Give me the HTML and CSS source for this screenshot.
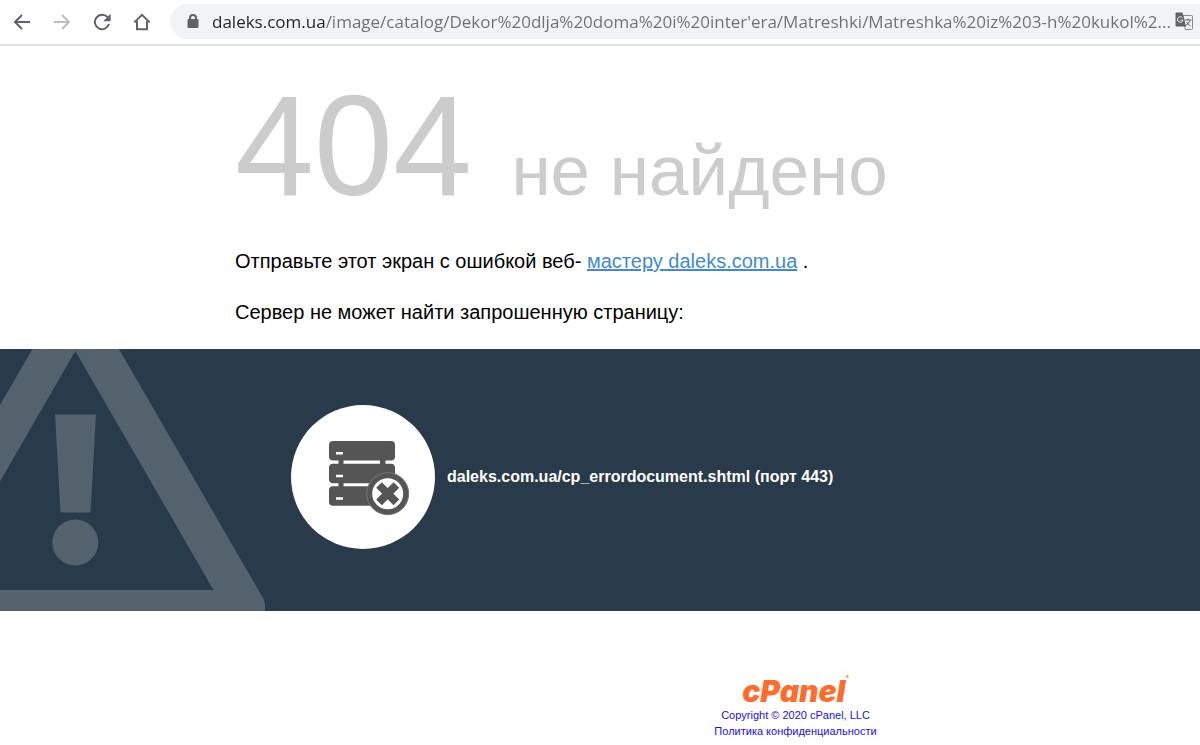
FILE: index.html
```
<!DOCTYPE html>
<html lang="ru">
  <head>
    <meta charset="utf-8">
    <title>404 не найдено</title>
    <link rel="stylesheet" href="styles.css">
  </head>
  <body>
    <div class="toolbar">
      <button class="nav-button" type="button" aria-label="Назад">
        <svg width="18" height="18" viewBox="0 0 18 18"><path d="M17 9H2M9 2L2 9l7 7"/></svg>
      </button>
      <button class="nav-button" type="button" aria-label="Вперёд" disabled>
        <svg width="18" height="18" viewBox="0 0 18 18"><path d="M1 9h15M9 2l7 7-7 7"/></svg>
      </button>
      <button class="nav-button" type="button" aria-label="Обновить">
        <svg width="18" height="18" viewBox="0 0 18 18"><path d="M14.5 4.2A7.2 7.2 0 1 0 16 11"/><path class="solid" d="M17.6 .8v7.4h-7.4z"/></svg>
      </button>
      <button class="nav-button" type="button" aria-label="Главная">
        <svg width="18" height="18" viewBox="0 0 18 18"><path d="M1.3 9.4L9 1.8l7.7 7.6M4 8v8.2h10V8"/></svg>
      </button>
      <div class="address">
        <svg class="lock" width="12" height="15" viewBox="0 0 12 15"><path class="solid" d="M1.5 5h9q1 0 1 1v7q0 1-1 1h-9q-1 0-1-1V6q0-1 1-1z"/><path d="M3 6V4a3 3 0 0 1 6 0v2"/></svg>
        <input class="url" type="text" aria-label="Адрес" value="daleks.com.ua/image/catalog/Dekor%20dlja%20doma%20i%20inter'era/Matreshki/Matreshka%20iz%203-h%20kukol%2...">
        <button class="translate" type="button" aria-label="Перевести">
          <svg width="19" height="19" viewBox="0 0 19 19">
            <path class="page" d="M8 3.5h8.5q1 0 1 1v12q0 1-1 1h-6.2z"/>
            <path class="strokes" d="M9.5 8h7M13 6.5V8M15 8q-1 4-5 6M11.5 10q1.5 3 4 4"/>
            <path class="solid" d="M1.5 .5h6L11 14.5H1.5q-1 0-1-1v-12q0-1 1-1z"/>
            <path class="mark" d="M7.5 5.8A2.8 2.8 0 1 0 8 8.2H5.3"/>
          </svg>
        </button>
      </div>
    </div>

    <div class="content">
      <h1>404 <span class="reason">не найдено</span></h1>
      <p>Отправьте этот экран с ошибкой веб- <a href="#">мастеру daleks.com.ua</a> .</p>
      <p>Сервер не может найти запрошенную страницу:</p>
    </div>

    <div class="info">
      <svg class="warning" width="266" height="262" viewBox="0 0 266 262">
        <path d="M32.5 0H119L263.5 250q1.5 3 1.5 6v6H0v-21H213.5L75.3 2 0 132.5V56z"/>
        <path d="M55 65.5h41L90.5 163.5h-30z"/>
        <circle cx="75.3" cy="193.5" r="23"/>
      </svg>
      <svg class="server" width="144" height="144" viewBox="0 0 144 144">
        <circle class="disc" cx="72" cy="72" r="72"/>
        <rect x="38" y="36" width="66" height="19.5" rx="4"/>
        <rect x="38" y="58.7" width="66" height="19.5" rx="4"/>
        <rect x="38" y="81.3" width="66" height="19.5" rx="4"/>
        <path d="M47.5 55h5v28h-5zM89 55h5.5v28H89z"/>
        <path class="disc" d="M45 47h7v2.5h-7zM45 69.7h7v2.5h-7zM45 92.3h7v2.5h-7z"/>
        <circle class="halo" cx="96.7" cy="88.7" r="21"/>
        <circle class="disc" cx="96.7" cy="88.7" r="15.5"/>
        <path class="cross" d="M88 80l17.4 17.4M105.4 80L88 97.4"/>
      </svg>
      <strong>daleks.com.ua/cp_errordocument.shtml (порт 443)</strong>
    </div>

    <div class="footer">
      <a class="logo" href="#">cPanel<sup>®</sup></a>
      <a href="#">Copyright © 2020 cPanel, LLC</a>
      <a href="#">Политика конфиденциальности</a>
    </div>
  </body>
</html>
```
FILE: styles.css
```
body {
    margin: 0;
    background: #ffffff;
    color: #000000;
    font-family: "Liberation Sans", Arial, sans-serif;
}

/* browser bar */
.toolbar {
    display: flex;
    align-items: center;
    gap: 16px;
    padding: 4px 0 5px 10px;
    border-bottom: 2px solid #dee1e6;
}
.nav-button, .translate {
    display: flex;
    align-items: center;
    justify-content: center;
    flex: none;
    width: 24px;
    height: 24px;
    padding: 0;
    border: 0;
    background: none;
}
.translate { width: 20px; }
.toolbar svg {
    fill: none;
    stroke: #5f6368;
    stroke-width: 2;
}
.nav-button:disabled svg { stroke: #babcbe; }
.toolbar .solid { fill: #5f6368; stroke: none; }
.address {
    display: flex;
    align-items: center;
    flex: 1;
    min-width: 0;
    height: 35px;
    padding: 0 6px 0 17px;
    border-radius: 18px 0 0 18px;
    background: #f1f3f4;
}
.lock { flex: none; }
.url {
    flex: 1;
    min-width: 0;
    margin: 0 0 0 13px;
    padding: 0;
    border: 0;
    outline: 0;
    font: 17px/24px "Open Sans", sans-serif;
    /* host is darker than the rest of the path */
    color: transparent;
    background: linear-gradient(90deg, #202124 114px, #6c6f73 114px);
    -webkit-background-clip: text;
    background-clip: text;
}
.translate .page { fill: #f1f3f4; stroke: #8a8d91; stroke-width: 1; }
.translate .strokes { stroke-width: 1; }
.translate .mark { stroke: #f1f3f4; stroke-width: 1; }

/* message */
.content {
    padding: 20px 0 1px 235px;
}
h1 {
    margin: 0 0 20px;
    color: #cccccc;
    font-size: 142px;
    font-weight: normal;
    line-height: 160px;
    white-space: nowrap;
}
.reason { font-size: 71px; line-height: 80px; }
p {
    margin: 0 0 21px;
    font-size: 20px;
    line-height: 30px;
}
p a { color: #428bca; }

.info {
    display: flex;
    align-items: center;
    gap: 12px;
    position: relative;
    min-height: 262px;
    box-sizing: border-box;
    padding: 0 0 6px 291px;
    margin-bottom: 64px;
    background: #293a4a;
    color: #ffffff;
    font-size: 16px;
    line-height: 24px;
}
.warning {
    position: absolute;
    left: 0;
    top: 0;
    fill: #54626e;
}
.server { flex: none; fill: #555555; }
.server .disc { fill: #ffffff; }
.server .halo { stroke: #777777; stroke-width: 1; }
.server .cross { stroke: #555555; stroke-width: 8; }

.footer {
    display: flex;
    flex-direction: column;
    align-items: center;
    padding-left: 391px;
    font-size: 11px;
    line-height: 16px;
}
.footer a { color: #1a0dea; text-decoration: none; }
.footer .logo {
    color: #ff6c2c;
    font-family: Inter, "Liberation Sans", sans-serif;
    font-size: 30px;
    font-style: italic;
    font-weight: 900;
    line-height: 32px;
}
.logo sup { font-size: 5px; line-height: 5px; vertical-align: top; }
```
